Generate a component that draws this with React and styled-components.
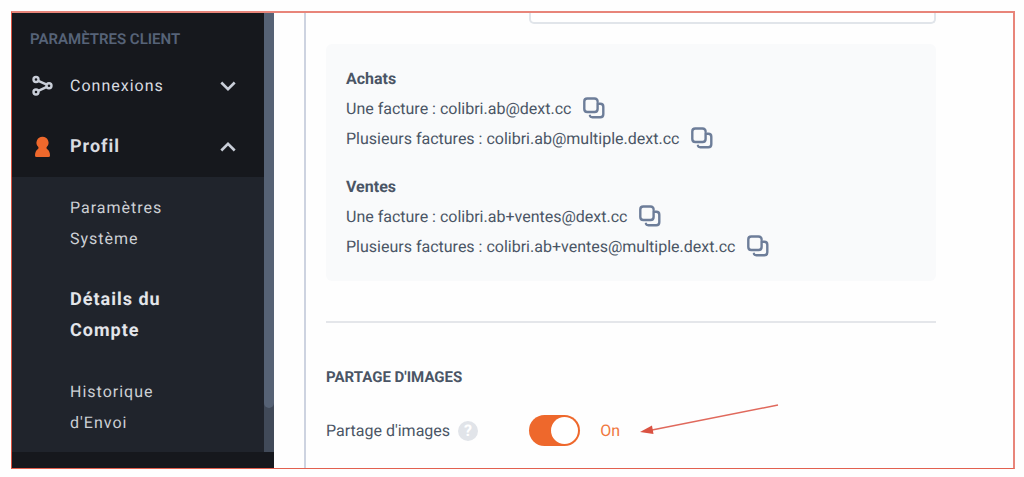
import React, { useState } from "react";
import styled, { createGlobalStyle } from "styled-components";

const GlobalStyle = createGlobalStyle`
  *, *::before, *::after { box-sizing: border-box; }
  body {
    margin: 0;
    background: #fefefe;
    color: #4a5565;
    font-family: Roboto, "Liberation Sans", sans-serif;
    font-size: 16px;
    text-rendering: geometricPrecision;
  }
  button, input { font: inherit; color: inherit; text-rendering: inherit; }
`;

const Frame = styled.div`
  display: flex;
  margin: 11px 9px 8px 11px;
  border: solid #e8857a;
  border-width: 2px 2px 1px 1px;
  border-left-color: #d9513f;
  border-bottom-color: #e2604f;
  overflow: hidden;
`;

const Sidebar = styled.aside`
  flex: none;
  display: flex;
  flex-direction: column;
  width: 262px;
  background: #16181d;
`;

const ScrollArea = styled.div`
  flex: none;
  display: flex;
`;

const Nav = styled.nav`
  flex: 1;
`;

const ScrollTrack = styled.div`
  width: 10px;
  background: #414a59;
`;

const ScrollThumb = styled.div`
  height: 90%;
  background: #566275;
  border-radius: 0 0 5px 5px;
`;

const NavHeading = styled.h2`
  margin: 0;
  padding: 16px 18px 6px;
  color: #566378;
  font-size: 15px;
  font-weight: 600;
  line-height: 20px;
`;

const NavButton = styled.button`
  display: flex;
  align-items: center;
  width: 100%;
  height: 61px;
  padding: 0 26px 0 18px;
  border: 0;
  background: none;
  color: #d9dce1;
  font-size: ${(p) => (p.$active ? "18px" : "16px")};
  font-weight: ${(p) => (p.$active ? 700 : 400)};
  letter-spacing: 1px;
  text-align: left;
  cursor: pointer;
`;

const NavIcon = styled.svg`
  width: 24px;
  height: 24px;
  margin-right: 16px;
`;

const Chevron = styled.svg`
  width: 20px;
  height: 20px;
  margin-left: auto;
`;

const SubMenu = styled.ul`
  display: grid;
  gap: 30px;
  margin: 0;
  padding: 15px 80px 14px 58px;
  background: #20242c;
  list-style: none;
`;

const SubLink = styled.a`
  display: block;
  color: ${(p) => (p.$active ? "#e3e5ea" : "#cdd0d5")};
  font-size: ${(p) => (p.$active ? "18px" : "16px")};
  font-weight: ${(p) => (p.$active ? 700 : 400)};
  letter-spacing: 1px;
  line-height: 31px;
  text-decoration: none;
`;

const Main = styled.main`
  flex: 1;
  margin-left: 30px;
  padding: 0 77px 22px 20px;
  border-left: 2px solid #cdd3e0;
`;

const FormRow = styled.div`
  position: relative;
  display: grid;
  grid-template-columns: 1fr 2fr;
  align-items: center;
`;

const TextInput = styled.input`
  grid-column: 2;
  width: 100%;
  height: 11px;
  padding: 0 12px;
  border: 2px solid #e1e5ea;
  border-top: 0;
  border-radius: 0 0 5px 5px;
  background: #fff;
`;

const Card = styled.section`
  display: grid;
  gap: 20px;
  margin-top: 20px;
  padding: 21px 20px 20px;
  border-radius: 6px;
  background: #f9fafb;
`;

const GroupTitle = styled.h3`
  margin: 0;
  font-size: 16px;
  font-weight: 700;
  line-height: 28px;
`;

const AddressRow = styled.div`
  display: flex;
  align-items: center;
  gap: 12px;
  height: 30px;
`;

const IconButton = styled.button`
  display: flex;
  padding: 0;
  border: 0;
  background: none;
  color: #6d7d99;
  cursor: pointer;
`;

const Divider = styled.hr`
  height: 2px;
  margin: 40px 0 44px;
  border: 0;
  background: #e4e6ea;
`;

const SectionTitle = styled.h2`
  margin: 0 0 28px;
  font-size: 15px;
  font-weight: 700;
  line-height: 20px;
`;

const LabelCell = styled.div`
  display: flex;
  align-items: center;
  gap: 8px;
`;

const HelpButton = styled.button`
  width: 20px;
  height: 20px;
  padding: 0;
  border: 0;
  border-radius: 50%;
  background: #e1e4e9;
  color: #fff;
  font-size: 16px;
  font-weight: 700;
  line-height: 20px;
`;

const SwitchCell = styled.div`
  display: flex;
  align-items: center;
  gap: 20px;
`;

const Switch = styled.input`
  appearance: none;
  display: flex;
  width: 51px;
  height: 31px;
  margin: 0;
  padding: 2px;
  border-radius: 16px;
  background: ${(p) => (p.checked ? "#ee682c" : "#b8bfca")};
  justify-content: ${(p) => (p.checked ? "flex-end" : "flex-start")};
  cursor: pointer;

  &::before {
    content: "";
    width: 27px;
    height: 27px;
    border-radius: 50%;
    background: #fff;
  }
`;

const SwitchState = styled.span`
  color: #f0783f;
`;

const Arrow = styled.svg`
  position: absolute;
  left: 314px;
  bottom: 8px;
  width: 140px;
  height: 36px;
  pointer-events: none;
`;

function CopyIcon() {
  return (
    <svg width="22" height="22" viewBox="0 0 22 22" fill="none" stroke="currentColor" strokeWidth="2.4" strokeLinecap="round" aria-hidden="true">
      <path d="M14.600 4.600C14.600 2.600 13.500 1.500 11.500 1.500H4.300Q1.300 1.500 1.300 4.500V12Q1.300 15 4.300 15H11.600Q14.600 15 14.600 12V6.700H17.300Q20.300 6.700 20.300 9.700V17.300Q20.300 20.300 17.300 20.300H9.300Q7.300 20.300 6.900 18.800" />
    </svg>
  );
}

function ConnectionsIcon() {
  return (
    <NavIcon viewBox="0 0 24 24" fill="none" stroke="#c9ced8" strokeWidth="2.400" aria-hidden="true">
      <circle cx="6" cy="5.500" r="2.500" />
      <circle cx="6" cy="18" r="2.500" />
      <circle cx="19" cy="11.700" r="2.500" />
      <path d="M8.300 6.800L16.800 10.700M8.300 16.800L16.800 12.800" />
    </NavIcon>
  );
}

function ProfileIcon() {
  return (
    <NavIcon viewBox="0 0 24 24" fill="#ee682c" aria-hidden="true">
      <path d="M12.500 1.800A6 6 0 0 1 16.700 12.100C16.300 13 16.500 13.600 17.300 14.200C19 15.500 20 17.400 20 20.500Q20 22 18.500 22H6.500Q5 22 5 20.500C5 17.400 6 15.500 7.700 14.200C8.500 13.600 8.700 13 8.300 12.100A6 6 0 0 1 12.500 1.800Z" />
    </NavIcon>
  );
}

function ChevronIcon({ up }) {
  return (
    <Chevron viewBox="0 0 20 20" fill="none" stroke="#c9ced8" strokeWidth="2.600" aria-hidden="true">
      <path d={up ? "M3.300 13.500L10 6.800L16.700 13.500" : "M3.300 6.500L10 13.200L16.700 6.500"} />
    </Chevron>
  );
}

const groups = [
  {
    title: "Achats",
    rows: ["Une facture : colibri.ab@dext.cc", "Plusieurs factures : colibri.ab@multiple.dext.cc"],
  },
  {
    title: "Ventes",
    rows: ["Une facture : colibri.ab+ventes@dext.cc", "Plusieurs factures : colibri.ab+ventes@multiple.dext.cc"],
  },
];

const subItems = ["Paramètres Système", "Détails du Compte", "Historique d'Envoi"];

export default function App() {
  const [shared, setShared] = useState(true);
  return (
    <>
      <GlobalStyle />
      <Frame>
        <Sidebar>
          <ScrollArea>
            <Nav>
              <NavHeading>PARAMÈTRES CLIENT</NavHeading>
              <NavButton type="button" aria-expanded="false">
                <ConnectionsIcon />
                Connexions
                <ChevronIcon />
              </NavButton>
              <NavButton type="button" aria-expanded="true" $active>
                <ProfileIcon />
                Profil
                <ChevronIcon up />
              </NavButton>
              <SubMenu>
                {subItems.map((item, i) => (
                  <li key={item}>
                    <SubLink href="#" $active={i === 1}>{item}</SubLink>
                  </li>
                ))}
              </SubMenu>
            </Nav>
            <ScrollTrack>
              <ScrollThumb />
            </ScrollTrack>
          </ScrollArea>
        </Sidebar>
        <Main>
          <FormRow>
            <TextInput type="text" aria-label="Adresse" />
          </FormRow>
          <Card>
            {groups.map((group) => (
              <div key={group.title}>
                <GroupTitle>{group.title}</GroupTitle>
                {group.rows.map((row) => (
                  <AddressRow key={row}>
                    <span>{row}</span>
                    <IconButton type="button" aria-label="Copier">
                      <CopyIcon />
                    </IconButton>
                  </AddressRow>
                ))}
              </div>
            ))}
          </Card>
          <Divider />
          <SectionTitle>PARTAGE D'IMAGES</SectionTitle>
          <FormRow>
            <LabelCell>
              <label htmlFor="share">Partage d'images</label>
              <HelpButton type="button" aria-label="Aide">?</HelpButton>
            </LabelCell>
            <SwitchCell>
              <Switch
                id="share"
                type="checkbox"
                role="switch"
                checked={shared}
                onChange={(e) => setShared(e.target.checked)}
              />
              <SwitchState>{shared ? "On" : "Off"}</SwitchState>
            </SwitchCell>
            <Arrow viewBox="0 0 140 36" aria-hidden="true">
              <path d="M138 3L12 28" stroke="#e0695c" strokeWidth="1.500" />
              <path d="M0 30L12 23.500L13.500 32Z" fill="#da5242" />
            </Arrow>
          </FormRow>
        </Main>
      </Frame>
    </>
  );
}
